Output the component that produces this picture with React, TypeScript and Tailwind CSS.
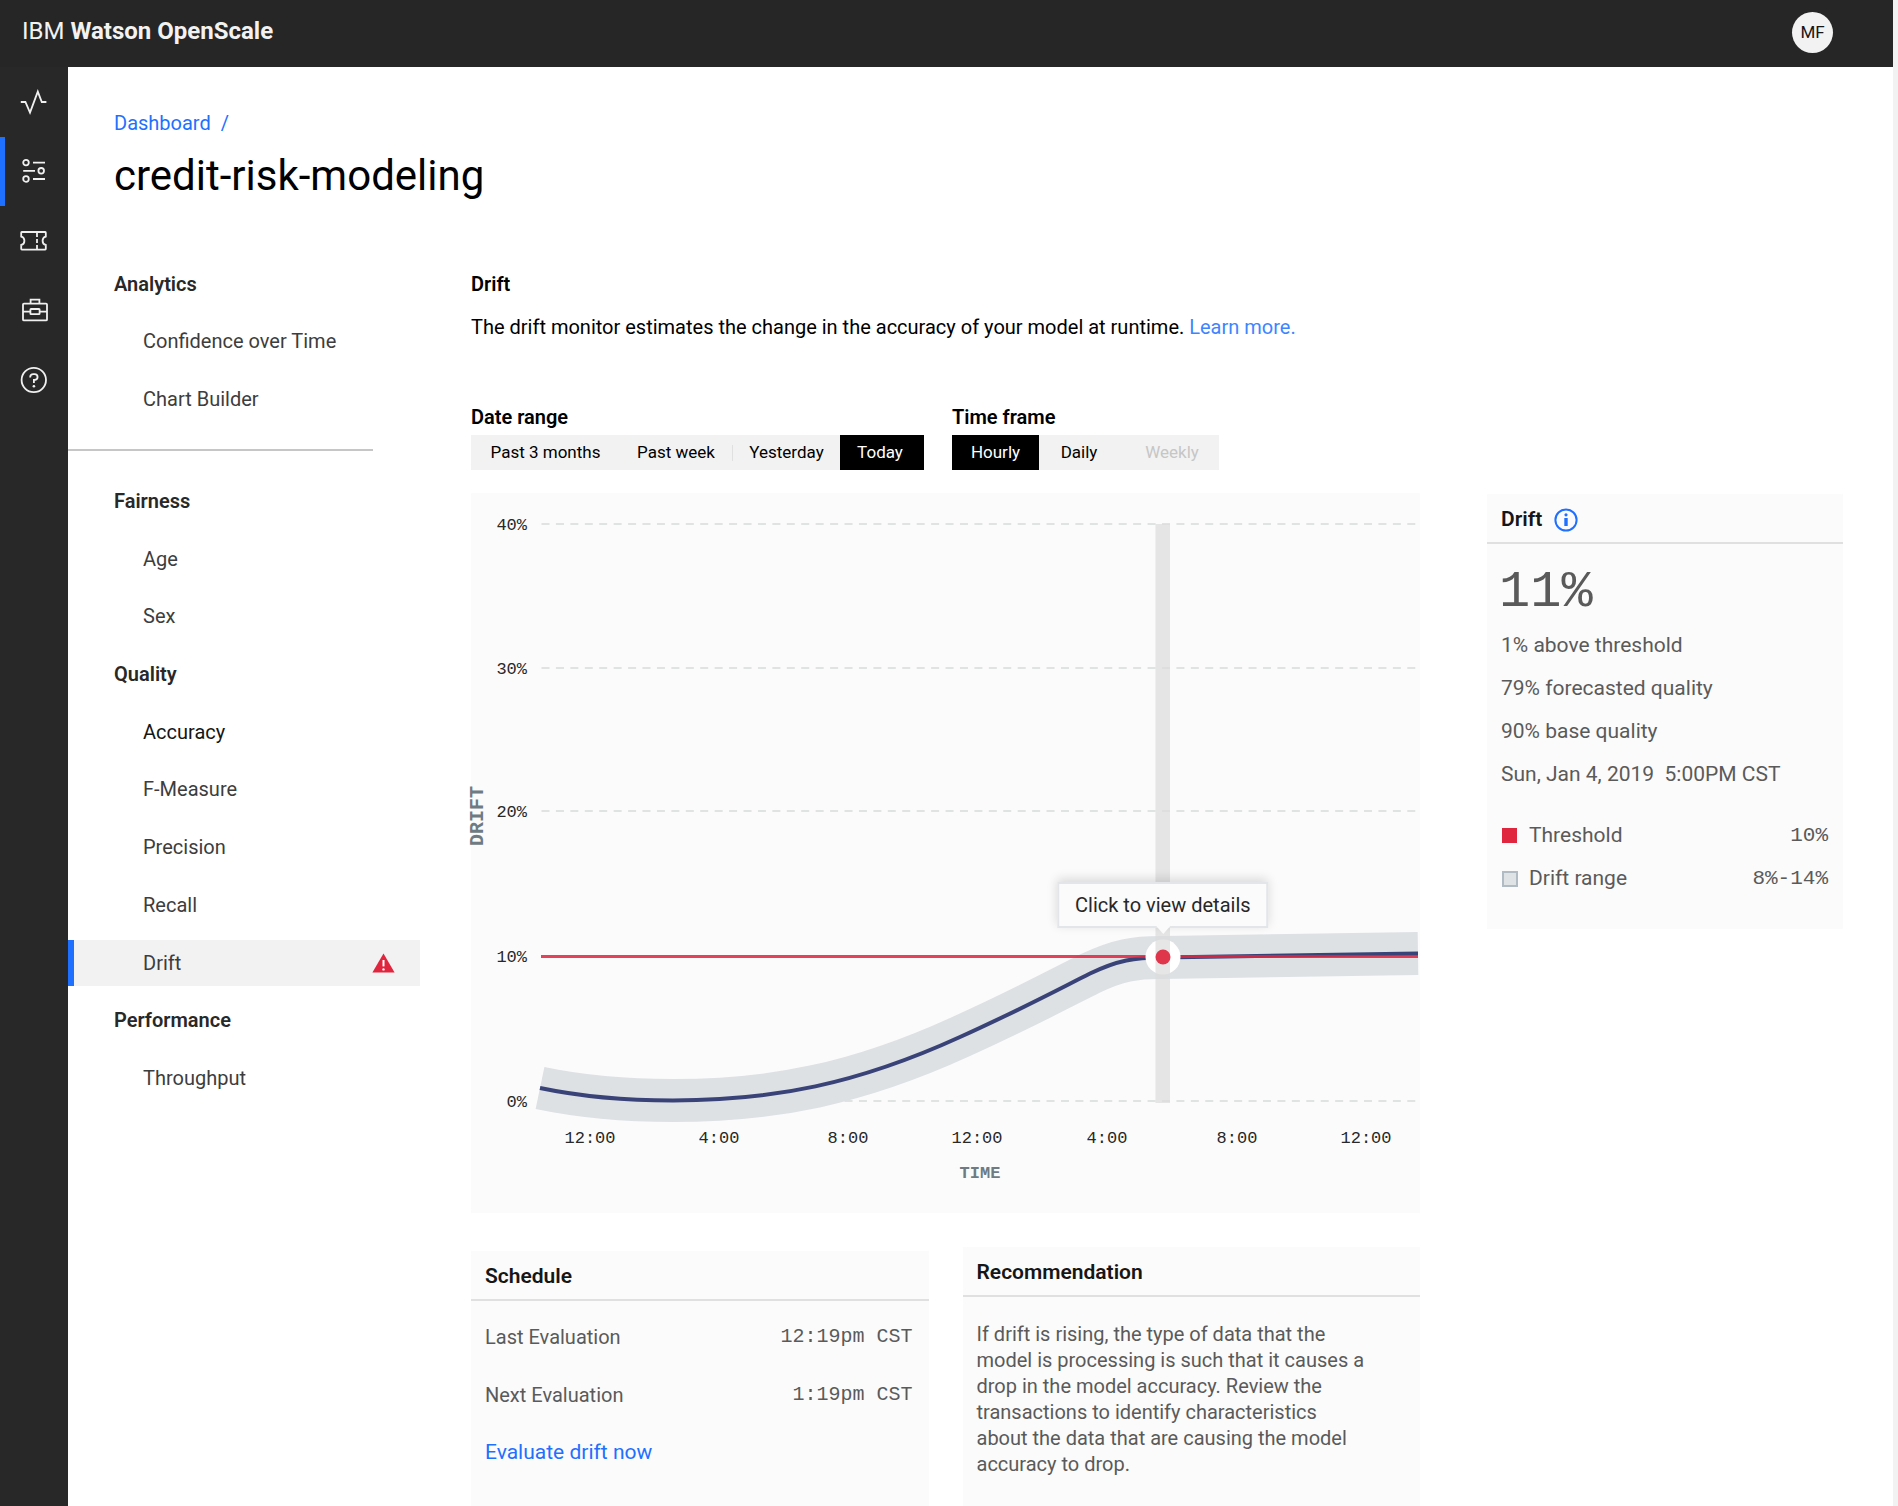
import type { ReactNode } from "react";

const mono = "font-['Liberation_Mono',monospace]";

function SideIcon({ children }: { children: ReactNode }) {
  return (
    <svg viewBox="0 0 28 28" className="size-7" fill="none" stroke="currentColor" strokeWidth="1.8" aria-hidden="true">
      {children}
    </svg>
  );
}

const sideLinks: { label: string; active?: boolean; icon: ReactNode }[] = [
  {
    label: "Activity",
    icon: <path d="M0.8 14H5.4L10 24.6L17.8 3.6L21.8 14H26.4" />,
  },
  {
    label: "Monitors",
    active: true,
    icon: (
      <>
        <circle cx="6" cy="5.6" r="2.8" />
        <circle cx="21.2" cy="13.8" r="2.8" />
        <circle cx="6" cy="22" r="2.8" />
        <path d="M13 5.6H25M3.2 13.8H15M13 22H25" />
      </>
    ),
  },
  {
    label: "Tickets",
    icon: (
      <>
        <path d="M1.8 5H25.2Q25.8 5 25.8 5.8V9.6Q22.6 10.2 22.6 13.8T25.8 18V21.8Q25.8 22.6 25.2 22.6H1.8Q1.2 22.6 1.2 21.8V18Q4.4 17.4 4.4 13.8T1.2 9.6V5.8Q1.2 5 1.8 5Z" />
        <path d="M17 6V10M17 12V16M17 18V22" />
      </>
    ),
  },
  {
    label: "Assets",
    icon: (
      <>
        <rect x="3" y="6.6" width="24" height="16.8" rx="1" />
        <path d="M10.6 6.6V2.6H19.4V6.6M3 14.6H10.4M19.6 14.6H27" />
        <rect x="10.4" y="12" width="9.2" height="5.2" rx="0.6" />
      </>
    ),
  },
  {
    label: "Help",
    icon: (
      <>
        <circle cx="13.8" cy="14" r="12.2" />
        <path d="M10.2 11.6V11A3 3 0 0 1 13.2 8.2H14.6A3 3 0 0 1 17.6 11.1Q17.6 13.9 14.4 14H13.9V17" />
        <circle cx="13.9" cy="20.2" r="1.3" fill="currentColor" stroke="none" />
      </>
    ),
  },
];

type NavRow = { text: string; heading?: boolean; strong?: boolean; active?: boolean };

const analyticsRows: NavRow[] = [
  { text: "Analytics", heading: true },
  { text: "Confidence over Time" },
  { text: "Chart Builder" },
];

const monitorRows: NavRow[] = [
  { text: "Fairness", heading: true },
  { text: "Age" },
  { text: "Sex" },
  { text: "Quality", heading: true },
  { text: "Accuracy", strong: true },
  { text: "F-Measure" },
  { text: "Precision" },
  { text: "Recall" },
  { text: "Drift", active: true },
  { text: "Performance", heading: true },
  { text: "Throughput" },
];

function NavItem({ row }: { row: NavRow }) {
  if (row.heading) {
    return <h2 className="flex items-center pl-[46px] text-[20px] font-semibold text-[#282828]">{row.text}</h2>;
  }
  if (row.active) {
    return (
      <div className="flex items-center">
        <a
          href="#drift"
          aria-current="page"
          className="flex h-[46px] flex-1 items-center justify-between border-l-[6px] border-[#1f70ff] bg-[#f2f2f2] pr-[25px] pl-[69px] text-[#3d3d3d]"
        >
          {row.text}
          <svg viewBox="0 0 23 20" className="h-5 w-[23px]" role="img" aria-label="Alert">
            <path d="M11.5 0.5L22.6 19.6H0.4Z" fill="#e0263f" />
            <path d="M11.5 7V13.4" stroke="#fff" strokeWidth="2" />
            <circle cx="11.5" cy="16.4" r="1.2" fill="#fff" />
          </svg>
        </a>
      </div>
    );
  }
  return (
    <a
      href={"#" + row.text.toLowerCase().replaceAll(" ", "-")}
      className={row.strong ? "flex items-center pl-[75px] text-[#161616]" : "flex items-center pl-[75px] text-[#3d3d3d]"}
    >
      {row.text}
    </a>
  );
}

const segment = "h-full text-[17px] leading-none";
const segmentOn = segment + " bg-black text-white";

function Controls() {
  return (
    <div className="flex gap-7">
      <div role="group" aria-labelledby="range-label">
        <h3 id="range-label" className="text-[20px] leading-7 font-semibold">
          Date range
        </h3>
        <div className="mt-1 flex h-[35px] items-center bg-[#f2f2f2]">
          <button className={segment + " w-[149px]"}>Past 3 months</button>
          <button className={segment + " w-28"}>Past week</button>
          <span className="h-4 w-px bg-[#e0e0e0]" />
          <button className={segment + " w-[107px]"}>Yesterday</button>
          <button aria-pressed="true" className={segmentOn + " w-[84px] pr-1"}>
            Today
          </button>
        </div>
      </div>
      <div role="group" aria-labelledby="frame-label">
        <h3 id="frame-label" className="text-[20px] leading-7 font-semibold">
          Time frame
        </h3>
        <div className="mt-1 flex h-[35px] items-center bg-[#f2f2f2]">
          <button aria-pressed="true" className={segmentOn + " w-[87px]"}>
            Hourly
          </button>
          <button className={segment + " w-20"}>Daily</button>
          <button disabled className={segment + " w-[100px] pl-1.5 text-[#c6c6c6]"}>
            Weekly
          </button>
        </div>
      </div>
    </div>
  );
}

const yTicks = [
  { label: "40%", y: 31 },
  { label: "30%", y: 175 },
  { label: "20%", y: 318 },
  { label: "10%", y: 463 },
  { label: "0%", y: 608 },
];

const xTicks = [
  { label: "12:00", x: 119 },
  { label: "4:00", x: 248 },
  { label: "8:00", x: 377 },
  { label: "12:00", x: 506 },
  { label: "4:00", x: 636 },
  { label: "8:00", x: 766 },
  { label: "12:00", x: 895 },
];

const curve = "M69 595C112 604 157 607.5 202 607.5C302 607.5 386 591 489 544C549 517 590 495 619 480.500C647 467 664 464.500 690 464.500L947 460.500";

function Chart() {
  return (
    <div className="relative mt-[23px] bg-[#fbfbfb]">
      <svg viewBox="0 0 949 720" className="block w-full overflow-visible" role="img" aria-label="Drift over time">
        {yTicks.map((t) =>
          t.label === "10%" ? null : (
            <path key={t.label} d={"M70.500 " + t.y + "H946"} stroke="#dfe3e2" strokeWidth="2" strokeDasharray="8 6.43" />
          ),
        )}
        <path d={curve} fill="none" stroke="#dde1e4" strokeWidth="43" />
        <path d={curve} fill="none" stroke="#3a4378" strokeWidth="4" />
        <path d="M70 463.500H947" stroke="#e0263f" strokeOpacity="0.87" strokeWidth="3" />
        <circle cx="692" cy="464" r="17.5" fill="#fff" />
        <rect x="684.500" y="31" width="14.500" height="579" fill="#dcdcdc" fillOpacity="0.7" />
        <circle cx="692" cy="464" r="7.5" fill="#e0364c" />
        <g fill="#282828" className={mono} fontSize="17">
          {yTicks.map((t) => (
            <text key={t.label} x="56" y={t.y + 6} textAnchor="end">
              {t.label}
            </text>
          ))}
          {xTicks.map((t) => (
            <text key={t.x} x={t.x} y="650" textAnchor="middle">
              {t.label}
            </text>
          ))}
        </g>
        <g fill="#6f7b83" className={mono} fontWeight="700">
          <text x="509" y="685" textAnchor="middle" fontSize="17">
            TIME
          </text>
          <text x="0" y="0" transform="translate(12 323) rotate(-90)" textAnchor="middle" fontSize="20">
            DRIFT
          </text>
        </g>
      </svg>
      <button className="absolute top-[54%] left-[72.9%] -translate-x-1/2 border-2 border-[#e3e6e9] bg-[#fbfbfb] px-4 py-[7px] text-[20px] leading-7 whitespace-nowrap text-[#282828] shadow-[0_-3px_10px_rgba(0,0,0,0.14)]">
        Click to view details
        <svg viewBox="0 0 14 9" className="absolute top-full left-1/2 h-[9px] w-3.5 -translate-x-1/2" aria-hidden="true">
          <path d="M0 0H14L7 8Z" fill="#fbfbfb" />
        </svg>
      </button>
    </div>
  );
}

const cardTitle = "flex h-[50px] items-center border-b-2 border-[#e0e0e0] pt-1 pl-3.5 text-[21px] font-semibold text-[#161616]";

function BottomCards() {
  return (
    <div className="mt-[34px] grid flex-1 grid-cols-2 gap-[34px]">
      <section className="mt-1 bg-[#fbfbfb] text-[20px] text-[#5a5a5a]">
        <h3 className={cardTitle}>Schedule</h3>
        <dl className="mt-[7px] pr-4 pl-3.5">
          <div className="flex h-[58px] items-center justify-between">
            <dt>Last Evaluation</dt>
            <dd className={mono}>12:19pm CST</dd>
          </div>
          <div className="flex h-[58px] items-center justify-between">
            <dt>Next Evaluation</dt>
            <dd className={mono}>1:19pm CST</dd>
          </div>
        </dl>
        <button className="h-[58px] pl-3.5 text-[21px] text-[#1f70ff]">Evaluate drift now</button>
      </section>
      <section className="bg-[#fbfbfb]">
        <h3 className={cardTitle}>Recommendation</h3>
        <p className="mt-6 max-w-[440px] pl-3.5 text-[20px] leading-[26px] text-[#5a5a5a]">
          If drift is rising, the type of data that the
          <br />
          model is processing is such that it causes a
          <br />
          drop in the model accuracy. Review the
          <br />
          transactions to identify characteristics
          <br />
          about the data that are causing the model
          <br />
          accuracy to drop.
        </p>
      </section>
    </div>
  );
}

function DriftCard() {
  return (
    <section className="mt-[239px] h-[435px] w-[356px] shrink-0 bg-[#fbfbfb] text-[21px] text-[#5a5a5a]">
      <h3 className={cardTitle + " gap-3"}>
        Drift
        <svg viewBox="0 0 24 24" className="size-6" fill="none" stroke="#1f70ff" strokeWidth="2" role="img" aria-label="Information">
          <circle cx="12" cy="12" r="10.6" />
          <circle cx="12" cy="6.8" r="1.6" fill="#1f70ff" stroke="none" />
          <path d="M12 10V18" strokeWidth="3.4" />
        </svg>
      </h3>
      <p className={mono + " mt-5 pl-3 text-[52px] leading-[58px]"}>11%</p>
      <div className="mt-0.5 pl-3.5 leading-[43px]">
        <p>1% above threshold</p>
        <p>79% forecasted quality</p>
        <p>90% base quality</p>
        <p className="whitespace-pre">Sun, Jan 4, 2019  5:00PM CST</p>
      </div>
      <dl className="mt-[18px] px-[15px] leading-[43px]">
        <div className="flex items-center">
          <span className="size-[15px] bg-[#e0263f]" />
          <dt className="flex-1 pl-3">Threshold</dt>
          <dd className={mono}>10%</dd>
        </div>
        <div className="flex items-center">
          <span className="size-4 border-2 border-[#b0bbc3] bg-[#dfe3e6]" />
          <dt className="flex-1 pl-[11px]">Drift range</dt>
          <dd className={mono}>8%-14%</dd>
        </div>
      </dl>
    </section>
  );
}

export default function App() {
  return (
    <div className="flex min-h-screen flex-col border-r-[5px] border-[#f2f2f2] bg-white font-['Roboto',sans-serif] text-[20px] text-black">
      <header className="flex h-[67px] items-center justify-between bg-[#262626] pr-[60px] pl-[22px]">
        <p className="pb-1.5 text-[24px] text-[#f2f2f2]">
          IBM <b className="font-bold">Watson OpenScale</b>
        </p>
        <button className="mb-0.5 size-[41px] rounded-full bg-[#f2f2f2] text-[17px] text-[#161616]">MF</button>
      </header>
      <div className="flex flex-1">
        <nav aria-label="Main" className="w-[68px] shrink-0 bg-[#282828] text-[#f0f0f0]">
          <div className="flex h-[348px] flex-col">
            {sideLinks.map((l) => (
              <a
                key={l.label}
                href={"#" + l.label.toLowerCase()}
                aria-label={l.label}
                className={
                  l.active
                    ? "flex flex-1 items-center border-l-[5px] border-[#1f70ff] pl-[15px]"
                    : "flex flex-1 items-center pl-5"
                }
              >
                <SideIcon>{l.icon}</SideIcon>
              </a>
            ))}
          </div>
        </nav>
        <main className="flex flex-1 flex-col">
          <div className="pt-[42px] pl-[46px]">
            <nav aria-label="Breadcrumb" className="flex gap-2.5 leading-7 text-[#1f70ff]">
              <a href="#dashboard">Dashboard</a>
              <span>/</span>
            </nav>
            <h1 className="mt-2.5 text-[42px] leading-[58px]">credit-risk-modeling</h1>
          </div>
          <div className="mt-[50px] flex flex-1">
            <nav aria-label="Model" className="w-[352px] shrink-0">
              <div className="grid h-[173px] grid-rows-3">
                {analyticsRows.map((r) => (
                  <NavItem key={r.text} row={r} />
                ))}
              </div>
              <hr className="mt-[21px] w-[305px] border-t-2 border-[#c6c6c6]" />
              <div className="mt-[21px] grid h-[635px] grid-rows-11">
                {monitorRows.map((r) => (
                  <NavItem key={r.text} row={r} />
                ))}
              </div>
            </nav>
            <div className="ml-[51px] flex flex-1 flex-col">
              <h2 className="leading-[58px] font-semibold">Drift</h2>
              <p className="mb-[62px] leading-7">
                The drift monitor estimates the change in the accuracy of your model at runtime.{" "}
                <a href="#learn" className="text-[#3d85ff]">
                  Learn more.
                </a>
              </p>
              <Controls />
              <Chart />
              <BottomCards />
            </div>
            <div className="mr-[50px] ml-[67px]">
              <DriftCard />
            </div>
          </div>
        </main>
      </div>
    </div>
  );
}
